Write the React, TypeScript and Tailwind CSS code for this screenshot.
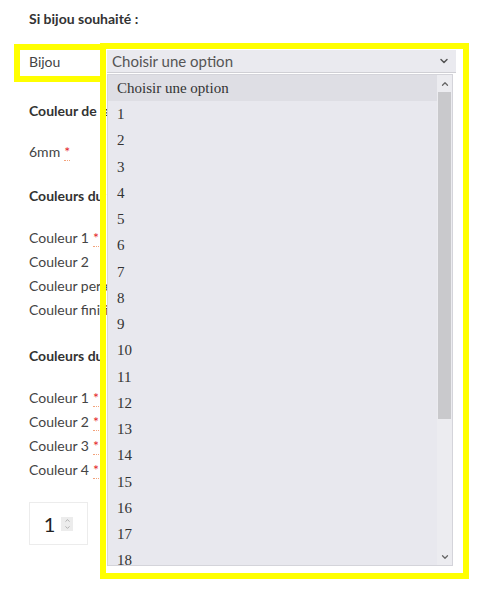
import { ChevronDown, ChevronUp } from "lucide-react";

const options = ["Choisir une option", ...Array.from({ length: 18 }, (_, i) => String(i + 1))];

function Req() {
  return <span className="text-[#e4262c] ml-1 border-b border-dotted border-[#f3a27a]">*</span>;
}

export default function App() {
  return (
    <div className="relative w-[479px] h-[604px] overflow-hidden bg-white font-['Lato','Noto_Sans',sans-serif] text-[14px] text-[#444]">
      <div className="pl-[29px] pt-[9px]">
        <div className="h-[20px] leading-[20px] font-bold text-[#333]">Si bijou souhaité :</div>

        {/* select row */}
        <div className="mt-[21px] flex h-[23px] items-center">
          <div className="w-[78px] leading-[20px] text-[#444]">Bijou</div>
          <div className="flex h-[23px] w-[349px] items-center justify-between border-b border-[#cfcfd4] bg-[#eaeaef] pl-[5px] pr-[6px] text-[15px] text-[#555]">
            <span>Choisir une option</span>
            <ChevronDown size={12} strokeWidth={3} className="text-[#555]" />
          </div>
        </div>

        <div className="mt-[28px] h-[20px] leading-[20px] font-bold text-[#333]">Couleur de la perle</div>
        <div className="mt-[21px] h-[20px] leading-[20px]">
          6mm<Req />
        </div>

        <div className="mt-[24px] h-[20px] leading-[20px] font-bold text-[#333]">Couleurs du fil</div>
        <div className="mt-[20px] flex flex-col leading-[24px]">
          <div>
            Couleur 1<Req />
          </div>
          <div>Couleur 2</div>
          <div>Couleur perle</div>
          <div>Couleur finition</div>
        </div>

        <div className="mt-[24px] h-[20px] leading-[20px] font-bold text-[#333]">Couleurs du sac</div>
        <div className="mt-[20px] flex flex-col leading-[24px]">
          <div>
            Couleur 1<Req />
          </div>
          <div>
            Couleur 2<Req />
          </div>
          <div>
            Couleur 3<Req />
          </div>
          <div>
            Couleur 4<Req />
          </div>
        </div>

        <div className="mt-[20px] flex items-center">
          <div className="flex h-[43px] w-[59px] items-center justify-center gap-[6px] border border-[#ececec]">
            <span className="text-[20px] text-[#222]">1</span>
            <div className="flex h-[14px] w-[12px] flex-col items-center justify-center bg-[#ececec] text-[#999]">
              <ChevronUp size={7} strokeWidth={2.5} />
              <ChevronDown size={7} strokeWidth={2.5} />
            </div>
          </div>
          <div className="ml-[19px] h-[38px] w-[200px] bg-[#6aa84f]" />
        </div>
      </div>

      {/* open dropdown list */}
      <div className="absolute left-[107px] top-[74px] flex h-[492px] w-[346px] border border-[#d4d4da] bg-[#e8e8ee]">
        <div className="flex-1 overflow-hidden font-['Liberation_Serif',serif] text-[15px] text-[#333]">
          {options.map((o, i) => (
            <div
              key={o}
              className={`flex h-[26.25px] items-center pl-[9px] ${i === 0 ? "bg-[#dedee4]" : ""}`}
            >
              {o}
            </div>
          ))}
        </div>
        <div className="flex w-[15px] flex-col items-center bg-[#ececf0]">
          <ChevronUp size={10} strokeWidth={3} className="mt-[4px] text-[#666]" />
          <div className="mt-[3px] h-[327px] w-[13px] bg-[#c9c9cc]" />
          <div className="flex-1" />
          <ChevronDown size={10} strokeWidth={3} className="mb-[3px] text-[#666]" />
        </div>
      </div>

      {/* yellow highlight outlines */}
      <div className="absolute left-[14px] top-[44px] h-[38px] w-[92px] border-[6px] border-[#ffff00]" />
      <div className="absolute left-[100px] top-[43px] h-[536px] w-[369px] border-[6px] border-[#ffff00]" />
    </div>
  );
}
